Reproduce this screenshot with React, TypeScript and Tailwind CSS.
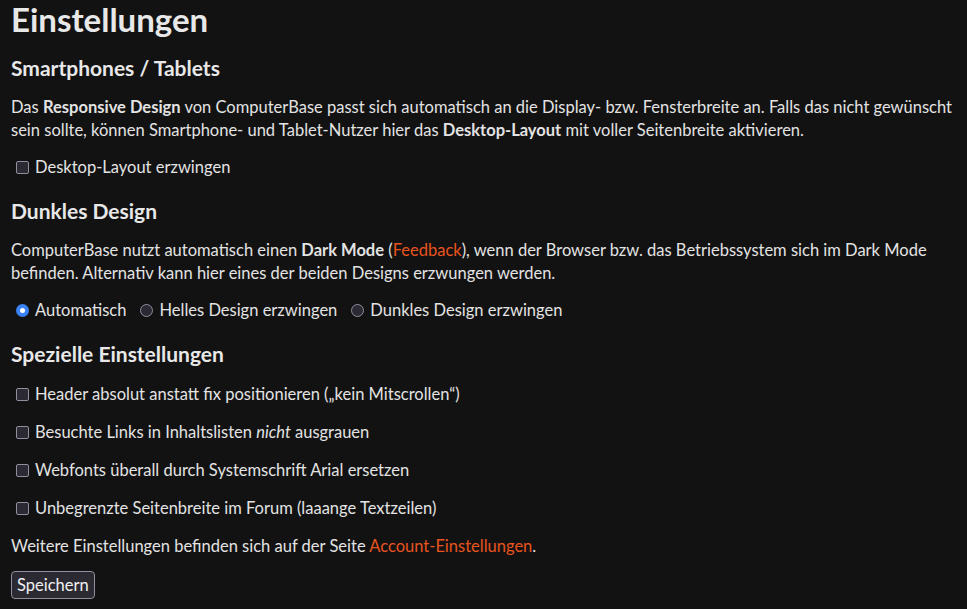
import React from "react";

const Checkbox = () => (
  <span className="inline-block w-[13px] h-[13px] shrink-0 rounded-[2px] border border-[#8f8f9d] bg-[#2b2a33]" />
);

const Radio = ({ checked }: { checked?: boolean }) =>
  checked ? (
    <span className="inline-flex w-[13px] h-[13px] shrink-0 items-center justify-center rounded-full bg-[#3b82f6]">
      <span className="w-[5px] h-[5px] rounded-full bg-white" />
    </span>
  ) : (
    <span className="inline-block w-[13px] h-[13px] shrink-0 rounded-full border border-[#8f8f9d] bg-[#2b2a33]" />
  );

const CheckRow = ({ children }: { children: React.ReactNode }) => (
  <label className="flex items-center gap-[6px] pl-[5px] h-[23px] mb-[15px]">
    <Checkbox />
    <span>{children}</span>
  </label>
);

const specials: React.ReactNode[] = [
  <>Header absolut anstatt fix positionieren („kein Mitscrollen“)</>,
  <>Besuchte Links in Inhaltslisten <em>nicht</em> ausgrauen</>,
  <>Webfonts überall durch Systemschrift Arial ersetzen</>,
  <>Unbegrenzte Seitenbreite im Forum (laaange Textzeilen)</>,
];

export default function App() {
  return (
    <div
      className="min-h-screen bg-[#121212] text-[#e3e3e3] px-[11px] text-[16.5px] leading-[23px]"
      style={{ fontFamily: "Lato, 'Noto Sans', sans-serif" }}
    >
      <h1 className="text-[33px] leading-[38px] font-bold text-[#e8e8e8]">Einstellungen</h1>

      <h2 className="text-[21px] leading-[28px] font-bold mt-[16px] mb-[14px] text-[#e8e8e8]">Smartphones / Tablets</h2>
      <p className="mb-[14px]">
        Das <b>Responsive Design</b> von ComputerBase passt sich automatisch an die Display- bzw. Fensterbreite an. Falls das
        nicht gewünscht sein sollte, können Smartphone- und Tablet-Nutzer hier das <b>Desktop-Layout</b> mit voller
        Seitenbreite aktivieren.
      </p>
      <CheckRow>Desktop-Layout erzwingen</CheckRow>

      <h2 className="text-[21px] leading-[28px] font-bold mt-[18px] mb-[14px] text-[#e8e8e8]">Dunkles Design</h2>
      <p className="mb-[14px]">
        ComputerBase nutzt automatisch einen <b>Dark Mode</b> (<a className="text-[#e8541e]">Feedback</a>), wenn der
        Browser bzw. das Betriebssystem sich im Dark Mode befinden. Alternativ kann hier eines der beiden Designs erzwungen
        werden.
      </p>
      <div className="flex items-center gap-[14px] pl-[5px] h-[23px]">
        <label className="flex items-center gap-[6px]">
          <Radio checked />
          <span>Automatisch</span>
        </label>
        <label className="flex items-center gap-[6px]">
          <Radio />
          <span>Helles Design erzwingen</span>
        </label>
        <label className="flex items-center gap-[6px]">
          <Radio />
          <span>Dunkles Design erzwingen</span>
        </label>
      </div>

      <h2 className="text-[21px] leading-[28px] font-bold mt-[18px] mb-[15px] text-[#e8e8e8]">Spezielle Einstellungen</h2>
      {specials.map((s, i) => (
        <CheckRow key={i}>{s}</CheckRow>
      ))}

      <p className="mb-[13px]">
        Weitere Einstellungen befinden sich auf der Seite <a className="text-[#e8541e]">Account-Einstellungen</a>.
      </p>
      <button className="h-[28px] px-[5px] rounded-[4px] border border-[#8f8f9d] bg-[#2b2a33] text-[#f0f0f0]">
        Speichern
      </button>
    </div>
  );
}
